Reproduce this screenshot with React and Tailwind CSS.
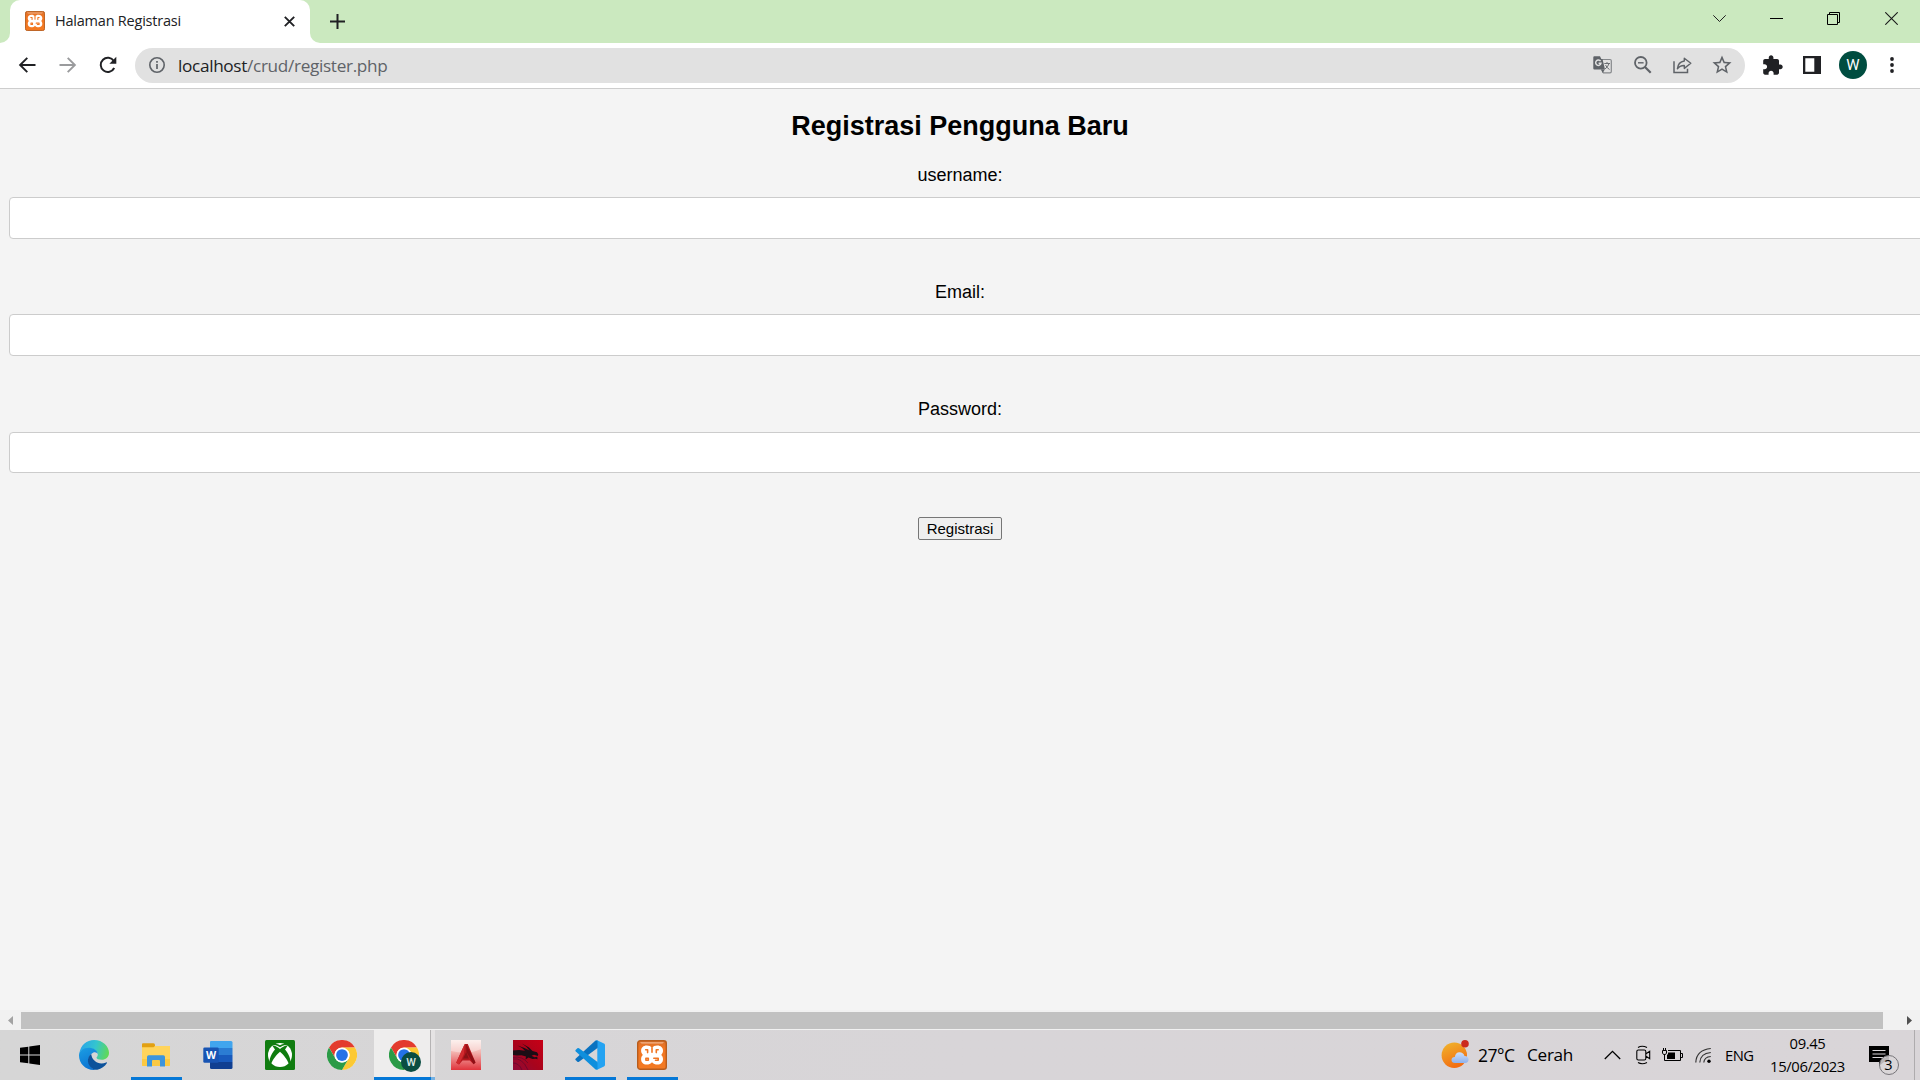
import React from "react";

const UI = "font-['Open_Sans',sans-serif]";

function Svg({ w, h, vb, className = "", children }) {
  return (
    <svg width={w} height={h} viewBox={vb || `0 0 ${w} ${h}`} fill="none" className={`block shrink-0 ${className}`}>
      {children}
    </svg>
  );
}

function Xampp({ size }) {
  return (
    <Svg w={size} h={size} vb="0 0 30 30">
      <defs>
        <linearGradient id="xo" x1="0" y1="0" x2="0" y2="1">
          <stop offset="0" stopColor="#d9702c" />
          <stop offset=".25" stopColor="#f07522" />
          <stop offset="1" stopColor="#f47a22" />
        </linearGradient>
      </defs>
      <rect x=".7" y=".7" width="28.6" height="28.6" rx="2.6" fill="url(#xo)" stroke="#b85c1c" strokeWidth="1.4" />
      <path d="M3 2.3H27L25.5 3.6H4.5Z" fill="#f3b48a" />
      <path
        d="M15 8.2C16 6.300 18 5.600 20.300 5.600C23.800 5.600 26 7.800 26 10.800C26 12.500 25.300 14 24.200 15C25.400 16 26 17.600 26 19.200C26 22.300 23.800 24.500 20.500 24.500C18.300 24.500 16.200 23.800 15 22.200C13.800 23.800 11.800 24.500 9.700 24.500C6.300 24.500 4.100 22.300 4.100 19.200C4.100 17.600 4.700 16 5.900 15C4.800 14 4.100 12.500 4.100 10.800C4.100 7.800 6.300 5.600 9.700 5.600C12 5.600 14 6.300 15 8.200Z"
        fill="#fff"
      />
      <path
        d="M8.700 9.700H10.600V12.600M19.300 12.600V9.700H21.200M8.900 19.800V18.200H11.300V20.300H8.900M16.800 18.200H21.200V20.300H18.500M15 8V12.300"
        stroke="#f07522"
        strokeWidth="1.600"
        strokeLinecap="round"
        strokeLinejoin="round"
      />
    </Svg>
  );
}

function Chrome() {
  return (
    <Svg w={30} h={30} vb="0 0 48 48">
      <circle cx="24" cy="24" r="24" fill="#fff" />
      <path d="M3.2 12A24 24 0 0 1 44.8 12L24 12.2A12 12 0 0 0 13.6 30Z" fill="#e33b2e" />
      <path d="M44.8 12A24 24 0 0 1 24 48L34.4 30A12 12 0 0 0 34.4 18L24 12Z" fill="#fcc934" />
      <path d="M3.2 12L13.6 30A12 12 0 0 0 34.4 30L24 48A24 24 0 0 1 3.2 12Z" fill="#2b9b47" />
      <circle cx="24" cy="24" r="12" fill="#fff" />
      <circle cx="24" cy="24" r="9.4" fill="#2472e8" />
    </Svg>
  );
}

function Edge() {
  return (
    <Svg w={30} h={30}>
      <defs>
        <linearGradient id="ea" x1="2" y1="6" x2="29" y2="14" gradientUnits="userSpaceOnUse">
          <stop stopColor="#2aa7e6" />
          <stop offset=".5" stopColor="#34c5cf" />
          <stop offset="1" stopColor="#61d957" />
        </linearGradient>
        <linearGradient id="eb" x1="4" y1="8" x2="14" y2="30" gradientUnits="userSpaceOnUse">
          <stop stopColor="#1a9be2" />
          <stop offset="1" stopColor="#0a6fd0" />
        </linearGradient>
      </defs>
      <path d="M0.4 13C1.8 5 7.8 0 15 0C24 0 30 6.5 30 12.8C30 17.5 26.5 19.8 22.8 19.8C19.5 19.8 17.5 18.8 17.5 17.8C17.5 17 18.8 16.4 18.8 14.4C18.8 11.3 15.5 8.4 10.8 8.4C5.5 8.4 1.5 10.6 0.4 13Z" fill="url(#ea)" />
      <path d="M0 15.5C0 10.8 4.5 7.6 10.5 7.8C15.4 8 18.8 11.2 18.8 14.2C18 12.5 16 11.8 14 12.8C10 14.8 8 20 10.8 25C12.5 28 15 29.8 17.5 29.9C16.6 30 15.8 30 15 30C6 30 0 23 0 15.5Z" fill="url(#eb)" />
      <path d="M12.2 14C9.5 16 8 20 9.6 24C11.3 28.2 14.8 30 18.3 29.7C22.5 28.8 25.8 26.4 27.8 23.2C28.2 22.5 27.7 22.1 27.1 22.4C20.5 25.4 13 21.5 12.2 14Z" fill="#0c529b" />
    </Svg>
  );
}

function Explorer() {
  return (
    <Svg w={28} h={24}>
      <path d="M0 3H28V22Q28 23 27 23H1Q0 23 0 22Z" fill="#ffd45c" />
      <path d="M0 1.2Q0 .3 1 .3H11.5Q13 .3 13 2V3L11.5 4.3H0Z" fill="#e2a012" />
      <path d="M0 16H28V22Q28 23 27 23H1Q0 23 0 22Z" fill="#fbc942" />
      <path d="M5 23.5V14Q5 12.3 6.7 12.3H21.3Q23 12.3 23 14V23.5H18V18Q18 17 17 17H11Q10 17 10 18V23.5Z" fill="#3d95dc" />
    </Svg>
  );
}

function Word() {
  return (
    <Svg w={30} h={30}>
      <path d="M7.5 1H28Q29.5 1 29.5 2.5V8H7V2Z" fill="#41a5ee" />
      <path d="M7 8H29.5V15H7Z" fill="#2b7cd3" />
      <path d="M7 15H29.5V22H7Z" fill="#185abd" />
      <path d="M7 22H29.5V27.5Q29.5 29 28 29H8.5Q7 29 7 27.5Z" fill="#103f91" />
      <rect x=".3" y="7.5" width="15.4" height="15.3" rx="1.3" fill="#1854b3" />
      <text x="8" y="18.8" textAnchor="middle" fontFamily="Open Sans" fontWeight="700" fontSize="10.5" fill="#fff">W</text>
    </Svg>
  );
}

function Xbox() {
  return (
    <Svg w={30} h={30}>
      <rect width="30" height="30" rx="1.5" fill="#107c10" />
      <circle cx="15" cy="15" r="12" fill="#fff" />
      <path d="M8 5.2C10.5 4.6 13 6 15 7.3C17 6 19.5 4.6 22 5.2L21.5 3.8C19 2 11 2 8.5 3.8Z" fill="#107c10" />
      <path d="M10.6 3.8Q15 2 19.4 3.8Q17 4.1 15 5.2Q13 4.1 10.6 3.8Z" fill="#fff" />
      <path
        d="M7.2 5.6C9.5 5 13 7.300 15 9C17 7.300 20.500 5 22.800 5.600L20 9.500C23.500 13.500 26 19 25.300 22.400L23.900 24.300C22.500 20 18.500 14.500 15 11.800C11.500 14.500 7.500 20 6.100 24.300L4.700 22.400C4 19 6.500 13.500 10 9.500Z"
        fill="#107c10"
      />
    </Svg>
  );
}

function AutoCad() {
  return (
    <Svg w={30} h={30}>
      <defs>
        <linearGradient id="ac" x1="0" y1="0" x2="0" y2="1">
          <stop stopColor="#fbe9e5" />
          <stop offset=".4" stopColor="#f3b5b0" />
          <stop offset="1" stopColor="#e0333c" />
        </linearGradient>
      </defs>
      <rect width="30" height="30" fill="url(#ac)" />
      <path d="M0 0H30V9Q18 15 0 11Z" fill="#fff" opacity=".35" />
      <path d="M13.7 4H16.8L24.5 22.5L22.6 24.2L18.8 20.5H11.5L8 24.4L5.2 22.8Z" fill="#b5171e" />
      <path d="M15.1 4L24.5 22.5L22.6 24.2L15.5 12Z" fill="#8d1016" />
      <path d="M15.2 12L17.800 18.500H12Z" fill="#8a1216" />
      <path d="M5.2 22.8L13.7 4L13 14L8 24.4Z" fill="#d12b2f" />
    </Svg>
  );
}

function Dragon() {
  return (
    <Svg w={30} h={30}>
      <defs>
        <linearGradient id="dr" x1="30" y1="0" x2="0" y2="30" gradientUnits="userSpaceOnUse">
          <stop stopColor="#c80016" />
          <stop offset=".55" stopColor="#a8041c" />
          <stop offset="1" stopColor="#8e0a38" />
        </linearGradient>
      </defs>
      <rect width="30" height="30" fill="url(#dr)" />
      <path
        d="M0 10.500L6 10L12 10.800L9 8L4.500 5.500L11.500 8L16.500 10.500L13.500 7L9 3.500L16 7.500L19.500 11L24 12.300L25.300 14.500L24.800 16L21 14.800L18.500 15.800L21.500 17.200L24.300 16.800L24.500 19.200L22.500 18.800L19.500 19L15.500 17.500L12.500 19.500L13 16.500L8.500 15.200L4 15.500L0 15Z"
        fill="#1c0d15"
      />
      <path d="M0 19Q9 17 15 30M0 23Q6 23 9 30M0 17.500Q9 15.500 15 23" stroke="#4a0a2e" strokeWidth=".9" opacity=".6" />
    </Svg>
  );
}

function VsCode() {
  return (
    <Svg w={30} h={30}>
      <path d="M22 .3L29 3.6Q30 4 30 5.2V24.8Q30 26 29 26.4L22 29.7L20.3 29.3L22.3 22V8L20.3 .7Z" fill="#24a3f2" />
      <path d="M20.3 .7L.8 18.5Q-.1 19.4 .8 20.3L2.4 21.8Q3.1 22.4 4 21.8L22.5 8V.4Z" fill="#0a72c0" />
      <path d="M20.3 29.3L.8 11.5Q-.1 10.6 .8 9.7L2.4 8.2Q3.1 7.6 4 8.2L22.5 22V29.5Z" fill="#0f8fdd" />
    </Svg>
  );
}

function TaskCell({ children, bar, active }) {
  return (
    <div className="relative flex h-[50px] w-[62px] shrink-0 items-center justify-center">
      {active && (
        <div className="absolute inset-0 flex pl-px">
          <div className="w-14 bg-[#eeeded]" />
          <div className="w-px bg-[#b5b3b4]" />
          <div className="flex-1 bg-[#e5e3e4]" />
        </div>
      )}
      <div className="relative">{children}</div>
      {bar && !active && <div className="absolute bottom-0 left-1.5 h-[3px] w-[51px] bg-[#0578d7]" />}
      {active && (
        <div className="absolute bottom-0 left-px flex h-[3px] w-[61px] bg-[#76b1e2]">
          <div className="w-[57px] bg-[#0578d7]" />
        </div>
      )}
    </div>
  );
}

function TabStrip() {
  return (
    <div className="flex h-[43px] bg-[#cbe9bf]">
      <div className="flex w-2.5 items-end bg-white">
        <div className="h-[43px] w-2.5 rounded-br-[10px] bg-[#cbe9bf]" />
      </div>
      <div className="flex w-[300px] items-center rounded-t-[10px] bg-white pb-px pl-[15px]">
        <Xampp size={20} />
        <span className={`${UI} -mt-px ml-2.5 w-[229px] whitespace-nowrap text-[14.5px] leading-5 tracking-[-0.22px] text-[#202124]`}>Halaman Registrasi</span>
        <Svg w={11} h={11}>
          <path d="M.8 .8L10.2 10.2M10.2 .8L.8 10.2" stroke="#202124" strokeWidth="1.9" />
        </Svg>
      </div>
      <div className="flex w-2.5 items-end bg-white">
        <div className="h-[43px] w-2.5 rounded-bl-[10px] bg-[#cbe9bf]" />
      </div>
      <Svg w={15} h={15} className="ml-2.5 mt-3.5">
        <path d="M7.5 0V15M0 7.5H15" stroke="#202124" strokeWidth="2" />
      </Svg>
      <div className="ml-auto flex pr-[22px] pt-3">
        <Svg w={13} h={13} className="mr-11">
          <path d="M.3 3.3L6.5 9.5L12.7 3.3" stroke="#202020" strokeWidth="1" />
        </Svg>
        <Svg w={13} h={13} className="mr-11">
          <path d="M0 6.5H13" stroke="#000" />
        </Svg>
        <Svg w={13} h={13} className="mr-[45px]">
          <path d="M.5 2.5H10.5V12.5H.5ZM2.5 2.5V.5H12.5V10.5H10.5" stroke="#000" />
        </Svg>
        <Svg w={13} h={13}>
          <path d="M.3 .3L12.7 12.7M12.7 .3L.3 12.7" stroke="#1a1a1a" strokeWidth="1.1" />
        </Svg>
      </div>
    </div>
  );
}

function Toolbar() {
  return (
    <div className="flex h-[46px] items-center border-b border-[#cdcdcd] bg-white pb-px">
      <Svg w={18} h={18} className="ml-[18px]">
        <path d="M17.5 9H2.5M9.3 1.8L2.1 9L9.3 16.2" stroke="#202124" strokeWidth="1.9" />
      </Svg>
      <Svg w={18} h={18} className="ml-[23px]">
        <path d="M.5 9H15.5M8.7 1.8L15.9 9L8.7 16.2" stroke="#9a9b9d" strokeWidth="1.9" />
      </Svg>
      <Svg w={18} h={18} className="ml-[22px]">
        <path d="M15.2 12A7.1 7.1 0 1 1 14.8 5" stroke="#202124" strokeWidth="2" />
        <path d="M17.3 .8V7.7H10.4Z" fill="#202124" />
      </Svg>
      <div className="ml-[18px] mt-[5px] flex h-[35px] w-[1610px] items-center self-start rounded-full bg-[#e1e1e1] pb-px pl-3.5 pr-3.5">
        <Svg w={16} h={16}>
          <circle cx="8" cy="8" r="7.2" stroke="#5f6368" strokeWidth="1.6" />
          <path d="M8 7V12M8 4V5.7" stroke="#5f6368" strokeWidth="1.7" />
        </Svg>
        <span className={`${UI} ml-[13px] mt-px whitespace-nowrap text-[17.2px] leading-6 tracking-[-0.33px] text-[#5f6368]`}>
          <span className="text-[#202124]">localhost</span>/crud/register.php
        </span>
        <Svg w={19} h={18} className="ml-auto">
          <path d="M8 3.5H17Q18.3 3.5 18.3 4.8V15.5Q18.3 16.8 17 16.8H10.5L8.5 13.5" fill="#e1e1e1" stroke="#85888b" strokeWidth="1.2" />
          <path d="M1.3 .3H7L8.3 3H9.5L12 13.5H1.3Q.3 13.5 .3 12.4V1.4Q.3 .3 1.3 .3Z" fill="#5f6368" />
          <path d="M8.3 13.5H11.8L9.5 17Z" fill="#5f6368" />
          <path d="M7.600 5.200A2.7 2.7 0 1 0 8 7.2H5.600" stroke="#e1e1e1" strokeWidth="1.5" />
          <path d="M11.3 7.5H17M14 6V7.5M16 7.6Q15 11 12 13M12.5 9Q14 12 16.5 13.5" stroke="#6c7074" strokeWidth="1" />
        </Svg>
        <Svg w={18} h={18} className="ml-[21.500px]">
          <circle cx="6.8" cy="6.8" r="5.8" stroke="#5f6368" strokeWidth="1.8" />
          <path d="M11 11L16.7 16.7" stroke="#5f6368" strokeWidth="2.2" />
          <path d="M4 6.8H9.6" stroke="#5f6368" strokeWidth="1.4" />
        </Svg>
        <Svg w={19} h={18} className="ml-[21.500px]">
          <path d="M1 5.3V16.5H14.5V12.8" stroke="#5f6368" strokeWidth="1.5" />
          <path d="M11.3 2.2L17.8 7.3L11.3 12.4V9.5C8.2 9.4 6.1 10.4 4.4 12.8C4.8 8.7 7 5.6 11.3 5Z" stroke="#5f6368" strokeWidth="1.4" strokeLinejoin="round" />
        </Svg>
        <Svg w={20} h={20} vb="1.5 1.5 21 21" className="ml-5 mr-[-1px]">
          <path d="M22 9.24l-7.19-.62L12 2 9.19 8.63 2 9.24l5.46 4.73L5.82 21 12 17.27 18.18 21l-1.63-7.03L22 9.24zM12 15.4l-3.76 2.27 1-4.28-3.32-2.88 4.38-.38L12 6.1l1.71 4.04 4.38.38-3.32 2.88 1 4.28L12 15.4z" fill="#5f6368" />
        </Svg>
      </div>
      <Svg w={20} h={20} vb="1.8 .8 21.5 21.5" className="ml-[18px]">
        <path d="M20.5 11H19V7c0-1.1-.9-2-2-2h-4V3.500C13 2.120 11.880 1 10.500 1S8 2.120 8 3.500V5H4c-1.100 0-1.990.9-1.990 2v3.800H3.500c1.490 0 2.700 1.210 2.700 2.700s-1.210 2.700-2.700 2.700H2V20c0 1.100.9 2 2 2h3.800v-1.500c0-1.490 1.210-2.700 2.700-2.700 1.490 0 2.700 1.210 2.700 2.700V22H17c1.100 0 2-.9 2-2v-4h1.500c1.380 0 2.500-1.120 2.500-2.500S21.880 11 20.500 11z" fill="#202124" />
      </Svg>
      <Svg w={18} h={18} className="ml-5">
        <path d="M0 0H18V18H0ZM2.300 2.300V15.700H11.300V2.300Z" fill="#202124" fillRule="evenodd" />
      </Svg>
      <div className="ml-[18px] flex h-7 w-7 items-center justify-center rounded-full bg-[#004d40] pt-px">
        <span className="font-[Roboto,sans-serif] text-[15px] leading-none text-white">W</span>
      </div>
      <Svg w={4} h={18} className="ml-[23px]">
        <circle cx="2" cy="3" r="1.900" fill="#202124" />
        <circle cx="2" cy="9" r="1.900" fill="#202124" />
        <circle cx="2" cy="15" r="1.900" fill="#202124" />
      </Svg>
    </div>
  );
}

function Field({ label, name, type, gap, height }) {
  return (
    <div className={`flex w-full flex-col ${gap}`}>
      <label htmlFor={name} className="h-5 text-center text-[18px] leading-5">{label}</label>
      <input id={name} type={type} className={`ml-[9px] w-[1920px] rounded-[4px] border border-[#cccccc] bg-white ${height}`} />
    </div>
  );
}

function Page() {
  return (
    <main className="flex h-[921px] flex-col items-center overflow-hidden bg-[#f4f4f4] font-['Liberation_Sans',Arial,sans-serif] text-black">
      <h2 className="mt-[22px] h-[30px] text-[27px] font-bold leading-[30px]">Registrasi Pengguna Baru</h2>
      <form className="flex w-full flex-col items-center">
        <Field label="username:" name="username" type="text" gap="mt-6" height="mt-3 h-[42px]" />
        <Field label="Email:" name="email" type="email" gap="mt-[43px]" height="mt-3 h-[42px]" />
        <Field label="Password:" name="password" type="password" gap="mt-[43px]" height="mt-[13px] h-[41px]" />
        <button type="button" className="mt-11 flex h-[23px] w-[84px] items-center justify-center rounded-[2px] border border-[#767676] bg-[#efefef] text-[15px] leading-none">
          Registrasi
        </button>
      </form>
    </main>
  );
}

function ScrollBar() {
  return (
    <div className="flex h-5 items-center bg-[#f1f1f1]">
      <Svg w={5} h={9} className="ml-2">
        <path d="M5 0V9L0 4.500Z" fill="#a3a3a3" />
      </Svg>
      <div className="ml-2 mt-0.5 h-[17px] w-[1862px] self-start bg-[#c1c1c1]" />
      <Svg w={5} h={9} className="ml-6">
        <path d="M0 0V9L5 4.500Z" fill="#505050" />
      </Svg>
    </div>
  );
}

function Tray() {
  return (
    <div className={`${UI} ml-auto flex h-[50px] w-[479px] items-center text-black`}>
      <Svg w={28} h={28} className="-mt-[2px]">
        <defs>
          <linearGradient id="sun" x1="5" y1="2" x2="15" y2="27" gradientUnits="userSpaceOnUse">
            <stop stopColor="#f0b42c" />
            <stop offset="1" stopColor="#f26d12" />
          </linearGradient>
          <linearGradient id="cloud" x1="0" y1="12" x2="0" y2="23" gradientUnits="userSpaceOnUse">
            <stop stopColor="#cfe0fa" />
            <stop offset="1" stopColor="#8fb2ec" />
          </linearGradient>
        </defs>
        <circle cx="13.300" cy="15.300" r="12.700" fill="url(#sun)" />
        <path d="M14 23Q10.500 23 10.500 20Q10.500 17.200 13.800 17Q14.500 12.500 18.500 12.300Q22.300 12.300 23.500 16Q27.500 16 27.500 19.600Q27.500 23 24 23Z" fill="url(#cloud)" />
        <circle cx="24" cy="3.800" r="3.800" fill="#cb2a1f" />
      </Svg>
      <span className="ml-[9px] w-[49px] whitespace-nowrap text-[17.500px] leading-6 tracking-[-0.500px]">27°C</span>
      <span className="w-[77px] whitespace-nowrap text-[17.200px] leading-6 tracking-[-0.300px]">Cerah</span>
      <Svg w={17} h={10}>
        <path d="M.8 9L8.500 1.300L16.200 9" stroke="#000" strokeWidth="1.300" />
      </Svg>
      <Svg w={15} h={20} className="ml-[15px]">
        <path d="M.8 6.500Q.8 5 2.300 5H8.300Q9.800 5 9.800 6.500V13.500Q9.800 15 8.300 15H2.300Q.8 15 .8 13.500ZM10 8.800L13.700 6.200V13.800L10 11.200M2 2.500Q6 0 11 2.500M2 17.500Q6 20 11 17.500" stroke="#000" strokeWidth="1.100" />
      </Svg>
      <Svg w={21} h={14} className="-mt-[1px] ml-[11px]">
        <path d="M6 2.500H18.500V12.500H4.500M19 5.500H20.500V9.500H19M1.500 0V2.500M3.500 0V2.500M.5 2.500H4.500V5L3.500 6.500H1.500L.5 5ZM2.500 6.500V12.500H5" stroke="#000" strokeWidth="1" />
        <path d="M6 4.500H13V11H5V7L6 6Z" fill="#000" />
      </Svg>
      <Svg w={17} h={17} className="ml-3">
        <path d="M.8 15.500Q1.300 3 15.800 1.500M4.800 15.500Q5.200 6.500 15.800 5.500M8.800 15.500Q9.200 10 15.800 9.500" stroke="#333" strokeWidth="1.200" />
        <circle cx="14" cy="14.300" r="1.700" fill="#000" />
      </Svg>
      <span className="ml-[13px] w-[31.500px] whitespace-nowrap text-[14.800px] leading-5 tracking-[-0.500px]">ENG</span>
      <div className="ml-[2px] flex w-[98px] flex-col items-center whitespace-nowrap text-[14.800px] leading-[23px] tracking-[-0.370px]">
        <span>09.45</span>
        <span>15/06/2023</span>
      </div>
      <div className="relative ml-3 h-[34px] w-[30px]">
        <Svg w={20} h={20} className="mt-2">
          <path d="M0 0H20V16H15L10 20V16H0Z" fill="#000" />
          <path d="M3.500 4.500H16.500M3.500 8H16.500M3.500 11.500H16.500" stroke="#d8d4d7" strokeWidth="1.200" />
        </Svg>
        <div className="absolute left-[10px] top-[17px] flex h-5 w-5 items-center justify-center rounded-full border border-[#77757a] bg-[#d9d6d8]/85 text-[14.500px] leading-none">3</div>
      </div>
      <div className="ml-auto mr-[5px] h-full w-px bg-[#aeabad]" />
    </div>
  );
}

function Taskbar() {
  return (
    <div className="flex h-[50px] bg-linear-to-r from-[#d6d6d6] via-[#d8d5d8] to-[#d9d5d8]">
      <div className="flex w-[63px] items-center pl-5">
        <Svg w={20} h={20}>
          <path d="M0 2.800L8.300 1.700V9.500H0ZM9.300 1.500L20 0V9.500H9.300ZM0 10.500H8.300V18.300L0 17.200ZM9.300 10.500H20V20L9.300 18.500Z" fill="#000" />
        </Svg>
      </div>
      <TaskCell><Edge /></TaskCell>
      <TaskCell bar><Explorer /></TaskCell>
      <TaskCell><Word /></TaskCell>
      <TaskCell><Xbox /></TaskCell>
      <TaskCell><Chrome /></TaskCell>
      <TaskCell bar active>
        <Chrome />
        <div className="absolute left-3 top-3 flex h-5 w-5 items-center justify-center rounded-full bg-[#0a4d42]">
          <span className="font-[Roboto,sans-serif] text-[11px] font-medium leading-none text-[#dfe9e6]">W</span>
        </div>
      </TaskCell>
      <TaskCell><AutoCad /></TaskCell>
      <TaskCell><Dragon /></TaskCell>
      <TaskCell bar><VsCode /></TaskCell>
      <TaskCell bar><Xampp size={30} /></TaskCell>
      <Tray />
    </div>
  );
}

export default function App() {
  return (
    <div className="flex h-[1080px] w-[1920px] flex-col overflow-hidden">
      <TabStrip />
      <Toolbar />
      <Page />
      <ScrollBar />
      <Taskbar />
    </div>
  );
}
